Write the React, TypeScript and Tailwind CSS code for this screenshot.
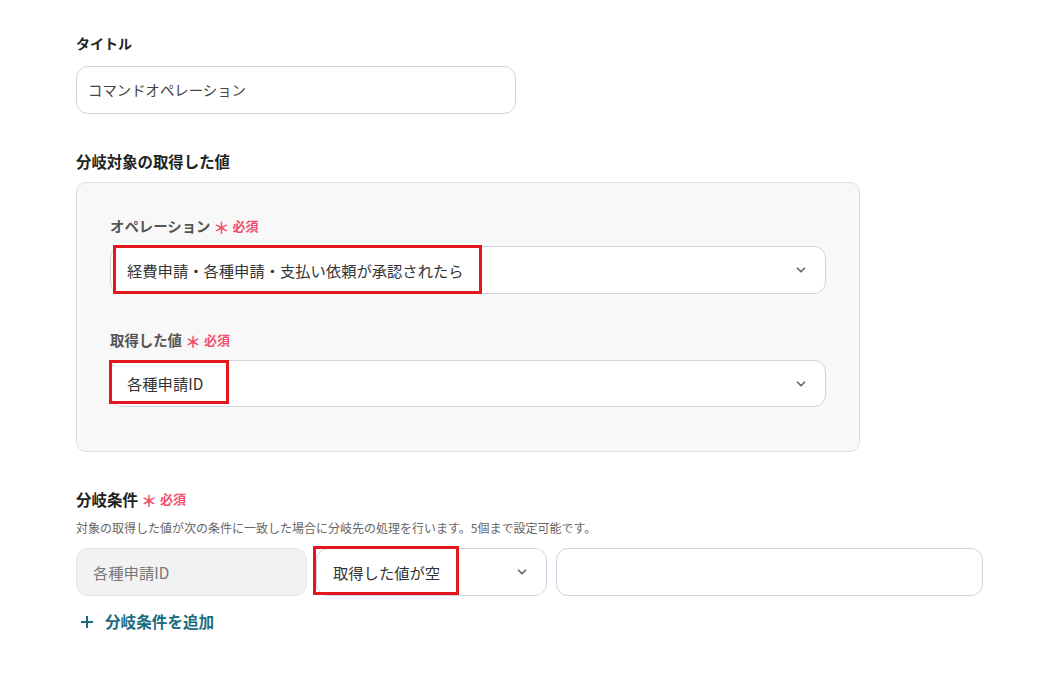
import React from "react";

const FONT = {
  fontFamily: '"Noto Sans CJK JP", "Noto Sans", sans-serif',
};

function Chevron() {
  return (
    <svg
      className="w-[14px] h-[14px] text-[#666]"
      viewBox="0 0 24 24"
      fill="none"
      stroke="currentColor"
      strokeWidth="3"
      strokeLinecap="round"
      strokeLinejoin="round"
    >
      <path d="M6 9l6 6 6-6" />
    </svg>
  );
}

function Required() {
  return (
    <span className="ml-[3px] inline-flex items-center text-[13px] font-bold text-[#f0506e]">
      <span className="text-[16px] leading-none mr-[3px] translate-y-[1px]">＊</span>
      必須
    </span>
  );
}

export default function App() {
  return (
    <div
      style={FONT}
      className="min-h-[677px] w-[1060px] bg-white pl-[76px] pt-[33px] text-[#333]"
    >
      {/* Title */}
      <div className="text-[14px] font-bold leading-[20px] text-[#222]">タイトル</div>
      <div className="mt-[13px] w-[440px] h-[48px] flex items-center px-[11px] rounded-[12px] border border-[#cfd4dc] text-[14.4px] text-[#444]">
        コマンドオペレーション
      </div>

      {/* Target value */}
      <div className="mt-[36px] text-[15.4px] font-bold leading-[22px] text-[#222]">
        分岐対象の取得した値
      </div>
      <div className="mt-[10px] w-[784px] rounded-[10px] border border-[#dedfe2] bg-[#f8f8f9] px-[33px] pt-[33px] pb-[44px]">
        <div className="flex items-center text-[14.4px] font-bold leading-[20px] text-[#555]">
          オペレーション
          <Required />
        </div>
        <div className="relative mt-[10px] h-[48px] flex items-center justify-between pl-[16px] pr-[17px] rounded-[12px] border border-[#cfd4dc] bg-white text-[15.3px] text-[#333]">
          <span>経費申請・各種申請・支払い依頼が承認されたら</span>
          <Chevron />
          <div className="absolute left-[2px] top-[-2px] w-[369px] h-[49px] border-[3px] border-[#e3171d]" />
        </div>

        <div className="mt-[36px] flex items-center text-[14.4px] font-bold leading-[20px] text-[#555]">
          取得した値
          <Required />
        </div>
        <div className="relative mt-[10px] h-[47px] flex items-center justify-between pl-[16px] pr-[17px] rounded-[12px] border border-[#cfd4dc] bg-white text-[15.3px] text-[#333]">
          <span>各種申請ID</span>
          <Chevron />
          <div className="absolute left-[-2px] top-[-1px] w-[120px] h-[44px] border-[3px] border-[#e3171d]" />
        </div>
      </div>

      {/* Conditions */}
      <div className="mt-[37px] flex items-center text-[15.5px] font-bold leading-[20px] text-[#222]">
        分岐条件
        <Required />
      </div>
      <div className="mt-[11px] text-[12px] leading-[16px] text-[#666]">
        対象の取得した値が次の条件に一致した場合に分岐先の処理を行います。5個まで設定可能です。
      </div>
      <div className="mt-[12px] flex gap-[9px]">
        <div className="w-[231px] h-[48px] flex items-center px-[16px] rounded-[12px] border border-[#e2e4e8] bg-[#f2f2f2] text-[15.3px] text-[#777]">
          各種申請ID
        </div>
        <div className="relative w-[231px] h-[48px] flex items-center justify-between pl-[16px] pr-[17px] rounded-[12px] border border-[#cfd4dc] bg-white text-[15.3px] text-[#333]">
          <span>取得した値が空</span>
          <Chevron />
          <div className="absolute left-[-4px] top-[-3px] w-[146px] h-[49px] border-[3px] border-[#e3171d]" />
        </div>
        <div className="w-[427px] h-[48px] rounded-[12px] border border-[#cfd4dc] bg-white" />
      </div>

      <div className="mt-[14px] flex items-center gap-[10px] pl-[3px] text-[15.6px] font-bold text-[#1b6b7e]">
        <svg className="w-[16px] h-[16px]" viewBox="0 0 16 16" fill="none" stroke="currentColor" strokeWidth="2">
          <path d="M8 2v12M2 8h12" />
        </svg>
        分岐条件を追加
      </div>
    </div>
  );
}
